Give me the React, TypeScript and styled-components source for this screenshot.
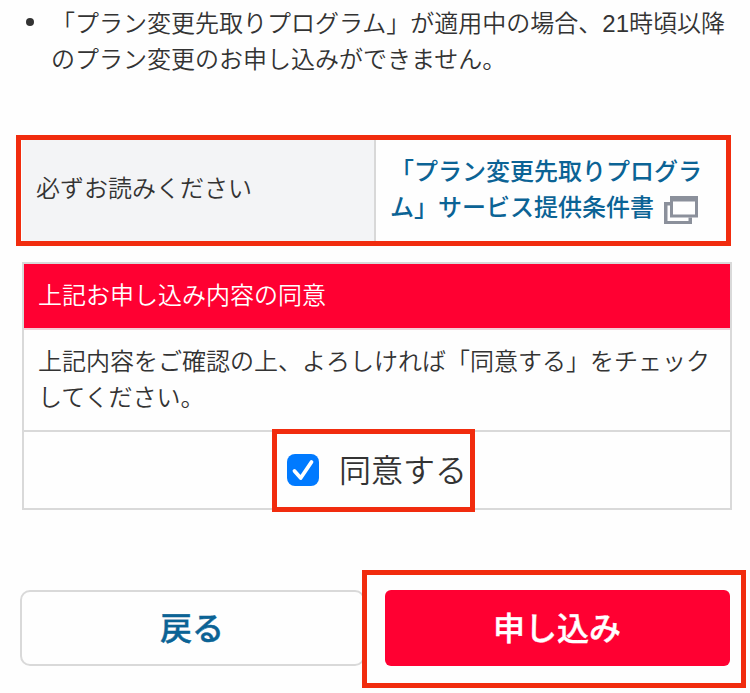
import React, { useState } from "react";
import styled, { createGlobalStyle } from "styled-components";

const GlobalStyle = createGlobalStyle`
  *, *::before, *::after { box-sizing: border-box; }
  body {
    margin: 0;
    background: #fefefe;
    color: #333;
    font-family: "Liberation Sans", "Noto Sans CJK JP", sans-serif;
    font-size: 24px;
    line-height: 36px;
    font-weight: 350;
  }
`;

const Page = styled.main`
  width: 750px;
  height: 693px;
  overflow: hidden;
  display: flex;
  flex-direction: column;
`;

const Notes = styled.ul`
  list-style: none;
  margin: 0;
  padding: 6px 18px 0 26px;
`;

const Note = styled.li`
  display: flex;
  gap: 17px;
  &::before {
    content: "";
    flex: none;
    width: 8px;
    height: 8px;
    margin-top: 12px;
    border-radius: 50%;
    background: #333;
  }
`;

const Digits = styled.span`
  font-weight: 400;
`;

const Highlight = styled.span<{ $top: number; $right: number; $bottom: number; $left: number }>`
  position: absolute;
  top: ${(p) => p.$top}px;
  right: ${(p) => p.$right}px;
  bottom: ${(p) => p.$bottom}px;
  left: ${(p) => p.$left}px;
  border: 5px solid #f12c0e;
  pointer-events: none;
`;

const Terms = styled.section`
  position: relative;
  display: grid;
  grid-template-columns: 352px 1fr;
  height: 103px;
  margin: 61px 22px 0 22px;
`;

const TermsLabel = styled.div`
  display: flex;
  align-items: center;
  padding: 0 0 3px 14px;
  background: #f3f4f6;
`;

const TermsBody = styled.div`
  border-left: 2px solid #d8d8d8;
  padding: 15px 0 0 14px;
`;

const TermsLink = styled.a`
  color: #0b6395;
  font-weight: 500;
  text-decoration: none;
`;

const WindowIcon = styled.svg`
  display: inline-block;
  width: 34px;
  height: 28px;
  margin-left: 10px;
  vertical-align: -8px;
`;

const Consent = styled.section`
  display: flex;
  flex-direction: column;
  height: 248px;
  margin: 20px 18px 0 22px;
  border: 2px solid #d9d9d9;
`;

const ConsentTitle = styled.h2`
  margin: 0;
  height: 66px;
  padding: 14px 14px;
  background: #ff0032;
  border-bottom: 2px solid #f3ced6;
  color: #fff;
  font-size: 24px;
  font-weight: 350;
`;

const ConsentText = styled.p`
  margin: 0;
  height: 102px;
  padding: 14px 14px 0;
  border-bottom: 2px solid #d9d9d9;
`;

const ConsentRow = styled.div`
  flex: 1;
  display: flex;
`;

const CheckLabel = styled.label`
  position: relative;
  display: flex;
  align-items: center;
  gap: 20px;
  margin-left: 263px;
  padding-bottom: 1px;
  font-size: 32px;
  cursor: pointer;
`;

const HiddenInput = styled.input`
  position: absolute;
  opacity: 0;
`;

const CheckText = styled.span`
  padding-top: 2px;
`;

const CheckBox = styled.span<{ $checked: boolean }>`
  display: flex;
  width: 32px;
  height: 32px;
  border-radius: 8px;
  background: ${(p) => (p.$checked ? "#007aff" : "#fff")};
`;

const Actions = styled.div`
  display: grid;
  grid-template-columns: 345px 345px;
  gap: 20px;
  height: 76px;
  margin: 80px 20px 0 20px;
`;

const ActionSlot = styled.div`
  position: relative;
  display: flex;
`;

const Button = styled.button<{ $primary?: boolean }>`
  flex: 1;
  padding: 1px 1px 0 0;
  border: ${(p) => (p.$primary ? "none" : "2px solid #d9d9d9")};
  border-radius: ${(p) => (p.$primary ? 6 : 10)}px;
  background: ${(p) => (p.$primary ? "#ff0032" : "#fefefe")};
  color: ${(p) => (p.$primary ? "#fff" : "#0b6395")};
  font-family: inherit;
  font-size: 32px;
  font-weight: 500;
  line-height: 48px;
  -webkit-text-stroke: 0.4px currentColor;
`;

export default function App() {
  const [agreed, setAgreed] = useState(true);
  return (
    <>
      <GlobalStyle />
      <Page lang="ja">
        <Notes>
          <Note>
            <span>
              「プラン変更先取りプログラム」が適用中の場合、<Digits>21</Digits>時頃以降
              <br />
              のプラン変更のお申し込みができません。
            </span>
          </Note>
        </Notes>
        <Terms>
          <TermsLabel>必ずお読みください</TermsLabel>
          <TermsBody>
            <TermsLink>
              「プラン変更先取りプログラ
              <br />
              ム」サービス提供条件書
              <WindowIcon viewBox="0 0 34 28" aria-hidden="true">
                <path d="M6 6V9.5H3.5V25H24.5V21.5H28V28H0V6Z" fill="#8b909b" />
                <path d="M6 0H34V21.5H6ZM9 5.5V18.5H31V5.5Z" fill="#8b909b" fillRule="evenodd" />
              </WindowIcon>
            </TermsLink>
          </TermsBody>
          <Highlight $top={-4} $right={-3} $bottom={-4} $left={-6} />
        </Terms>
        <Consent>
          <ConsentTitle>上記お申し込み内容の同意</ConsentTitle>
          <ConsentText>
            上記内容をご確認の上、よろしければ「同意する」をチェック
            <br />
            してください。
          </ConsentText>
          <ConsentRow>
            <CheckLabel>
              <HiddenInput
                type="checkbox"
                checked={agreed}
                onChange={(e) => setAgreed(e.target.checked)}
              />
              <CheckBox $checked={agreed}>
                <svg width="32" height="32" viewBox="0 0 32 32" aria-hidden="true">
                  <path
                    d="M7.5 17L13.7 24L24.5 8"
                    fill="none"
                    stroke="#fff"
                    strokeWidth="3.8"
                    strokeLinecap="round"
                    strokeLinejoin="round"
                  />
                </svg>
              </CheckBox>
              <CheckText>同意する</CheckText>
              <Highlight $top={-3} $right={-8} $bottom={-4} $left={-15} />
            </CheckLabel>
          </ConsentRow>
        </Consent>
        <Actions>
          <ActionSlot>
            <Button>戻る</Button>
          </ActionSlot>
          <ActionSlot>
            <Button $primary>申し込み</Button>
            <Highlight $top={-20} $right={-16} $bottom={-22} $left={-23} />
          </ActionSlot>
        </Actions>
      </Page>
    </>
  );
}
